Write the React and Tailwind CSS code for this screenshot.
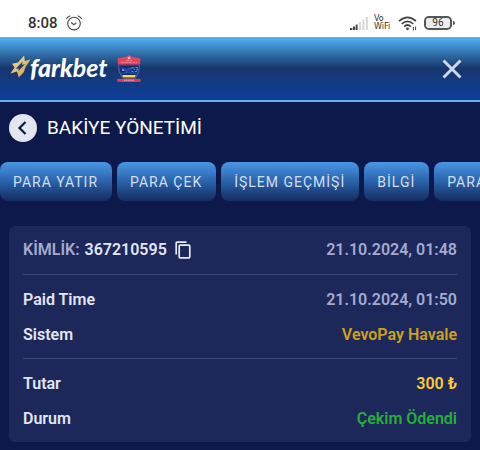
import React, { useState } from 'react'

const TABS = ['PARA YATIR', 'PARA ÇEK', 'İŞLEM GEÇMİŞİ', 'BİLGİ', 'PARA TRANSFERİ']

const SECTIONS = [
  [
    { label: 'Paid Time', value: '21.10.2024, 01:50', color: 'text-[#a4abce]' },
    { label: 'Sistem', value: 'VevoPay Havale', color: 'text-[#d0a01c]' },
  ],
  [
    { label: 'Tutar', value: '300 ₺', color: 'text-[#ffcb32]' },
    { label: 'Durum', value: 'Çekim Ödendi', color: 'text-[#27ae3c]' },
  ],
]

function AlarmIcon() {
  return (
    <svg className="w-4 h-4" viewBox="0 0 16 16" fill="none" stroke="#444" strokeWidth="1.1" strokeLinecap="round" strokeLinejoin="round">
      <circle cx="8" cy="8.6" r="6.3" />
      <path d="M5.4 7.8L8 9.7L10 8" />
      <path d="M0.7 3.6Q1.6 1.7 3.8 0.9M15.3 3.6Q14.4 1.7 12.2 0.9" />
    </svg>
  )
}

function SignalIcon() {
  return (
    <svg className="w-[18px] h-[13px]" viewBox="0 0 18 13">
      <path d="M0 11h2.4v2H0zM3 9.5h2.2V13H3zM5.8 7.500h1.8V13H5.800z" fill="#444" />
      <path d="M9 5h2v8H9zM12.3 2.500h2V13h-2zM15.8 0h2v13h-2z" fill="#d6d6d6" />
    </svg>
  )
}

function WifiIcon() {
  return (
    <svg className="w-5 h-[15px]" viewBox="0 0 20 15" fill="none" stroke="#444" strokeWidth="1.7">
      <path d="M1 5.2Q9.5 -2.6 18 5.2" />
      <path d="M3.7 8Q9.5 2.6 15.3 8" />
      <path d="M6.2 10.6Q9.5 7.4 12.8 10.6" />
      <circle cx="9.5" cy="12.8" r="1.4" fill="#444" stroke="none" />
      <path d="M15.4 14.5V11M17.6 10.5V14" strokeWidth="1" />
    </svg>
  )
}

function Battery({ level }) {
  return (
    <div className="flex items-center gap-px">
      <div className="w-7 h-[14px] rounded-[5px] border-2 border-[#555]">
        <div className="h-full rounded-sm bg-[#ececec] flex items-center justify-center text-[10px] leading-none tracking-wide text-[#333]">
          {level}
        </div>
      </div>
      <div className="w-0.5 h-1 rounded-r-sm bg-[#555]" />
    </div>
  )
}

function StarLogo() {
  return (
    <svg className="w-[22px] h-[23px]" viewBox="0 0 22 23">
      <defs>
        <linearGradient id="gold" x1="0" y1="0" x2="1" y2="1">
          <stop offset="0" stopColor="#f6e2ab" />
          <stop offset="0.5" stopColor="#e3bf70" />
          <stop offset="1" stopColor="#c1944a" />
        </linearGradient>
      </defs>
      <path
        fill="url(#gold)"
        fillRule="evenodd"
        d="M14.2 0.5L14.8 6L20.5 4.6L15.8 11.4L13.8 17.2L8.8 22.4L7 16.6L0.3 18.6L4.6 12.6L2 8.8L8 7.4ZM12.6 6.6L5.8 13.8L8.8 13.4L8.4 16L15.2 9L12 9.8Z"
      />
    </svg>
  )
}

function CrestBadge() {
  return (
    <svg className="w-[26px] h-7" viewBox="0 0 24 28">
      <path d="M1.6 9h20.8l-0.6 7.5L18.6 22.8H5.4L2.2 16.500z" fill="#172a78" stroke="#6f90cc" strokeWidth="0.7" />
      <path d="M0.5 3.500L9 1.8L12 0L15 1.8L23.500 3.500L23 9.500H1z" fill="#e8425c" />
      <path d="M1 9.500H23L22.8 10.600H1.2z" fill="#8f3558" />
      <path d="M10.8 1.8h2.400v2.400h-2.400z" fill="#f7c7cf" />
      <path d="M4 7.500h16M9 5.500h6" stroke="#f58a9a" strokeWidth="0.8" strokeDasharray="3 0.8" />
      <circle cx="6.5" cy="14.8" r="1.3" fill="#a9c8f2" />
      <path d="M3.500 12l6 2 2.500-1.500 2 1.500-2 2.500-3 0.500z" fill="#2450a4" />
      <path d="M13.500 13.500l3-1 1 2.500M18.500 12.500h1.800l-0.500 4h-2M14 16l2.500 0.8" stroke="#6a9ce0" strokeWidth="0.9" fill="none" />
      <path d="M4 18.200l6-0.500 9.500 0.500" stroke="#2a5cb0" fill="none" />
      <path d="M5.2 20h13.6l-0.900 2.300H6.1z" fill="#ece33a" />
      <path d="M0.3 24Q12 22.800 23.700 24V26.800Q12 27.400 0.3 26.800z" fill="#e53a5c" />
      <path d="M7 25.200h10" stroke="#ffb3c0" strokeWidth="1" strokeDasharray="1.5 0.6" />
    </svg>
  )
}

function StatusBar() {
  return (
    <div className="h-[37px] bg-white flex items-end justify-between pl-7 pr-[25px] pb-1.5 text-[#333]">
      <div className="flex items-center gap-2">
        <span className="text-[15px] leading-4 font-medium">8:08</span>
        <AlarmIcon />
      </div>
      <div className="flex items-center gap-1.5">
        <SignalIcon />
        <div className="w-[18px] flex flex-col font-['DejaVu_Sans',sans-serif] text-[8px] leading-2">
          <span>Vo</span>
          <span>WiFi</span>
        </div>
        <WifiIcon />
        <Battery level={96} />
      </div>
    </div>
  )
}

function Header() {
  return (
    <header className="h-[65px] flex items-center justify-between pl-2.5 pr-[18px] border-b-2 border-[#6fadf2] bg-linear-to-b from-[#55b5f8] via-[#17366c] to-[#0c3f9c]">
      <a href="#" aria-label="farkbet" className="flex items-center pb-1">
        <StarLogo />
        <span className="-ml-0.5 font-['Lato',sans-serif] text-[25px] leading-6 italic text-white">
          <span className="font-black">fark</span>
          <span className="font-bold">bet</span>
        </span>
        <span className="ml-2 pt-1"><CrestBadge /></span>
      </a>
      <button aria-label="Kapat">
        <svg className="w-5 h-5" viewBox="0 0 20 20" stroke="#cfdaee" strokeWidth="2.9">
          <path d="M1.500 1.500L18.500 18.500M18.500 1.500L1.500 18.500" />
        </svg>
      </button>
    </header>
  )
}

export default function App() {
  const [active, setActive] = useState('İŞLEM GEÇMİŞİ')

  return (
    <div className="min-h-screen overflow-hidden bg-[#0e194b] font-['Roboto',sans-serif]">
      <StatusBar />
      <Header />

      <main>
        {/* Title */}
        <div className="flex items-center gap-2.5 px-[9px] pt-3">
          <button aria-label="Geri" className="w-7 h-7 rounded-full bg-[#e4e6ef] flex items-center justify-center">
            <svg className="w-4 h-4" viewBox="0 0 16 16" fill="none" stroke="#0e194b" strokeWidth="2.2">
              <path d="M10.500 2L4.500 8L10.500 14" />
            </svg>
          </button>
          <h1 className="text-[19px] leading-7 text-white">BAKİYE YÖNETİMİ</h1>
        </div>

        {/* Tabs, the strip scrolls sideways */}
        <nav className="flex gap-[5px] pt-5 overflow-x-auto [scrollbar-width:none]">
          {TABS.map(tab => (
            <button
              key={tab}
              onClick={() => setActive(tab)}
              aria-pressed={active === tab}
              className="h-[39px] pl-[13px] pr-3.5 shrink-0 rounded-lg text-sm tracking-[1px] whitespace-nowrap text-[#d5deee] bg-linear-to-b from-[#4a97e6] via-[#2a63ab] to-[#142c5f]"
            >
              {tab}
            </button>
          ))}
        </nav>

        {/* Transaction card */}
        <section className="mx-[9px] mt-[25px] mb-2 px-3.5 rounded-md bg-[#1d285a] font-semibold text-[#e3e5f1]">
          <div className="h-12 flex items-center justify-between">
            <div className="flex items-center">
              <span className="text-[#a4abce]">KİMLİK:</span>
              <span className="ml-[5px]">367210595</span>
              <button aria-label="Kopyala" className="ml-2">
                <svg className="w-4 h-[18px]" viewBox="0 0 16 18" fill="none" stroke="#e8eaf4" strokeWidth="1.7">
                  <rect x="4.2" y="4.2" width="10.6" height="12.6" rx="1" />
                  <path d="M1.2 13.500V2Q1.2 1.2 2 1.2H11.500" />
                </svg>
              </button>
            </div>
            <time className="text-[#a4abce]">21.10.2024, 01:48</time>
          </div>
          {SECTIONS.map((rows, i) => (
            <dl key={i} className="border-t border-[#3a4677] pt-[7px] pb-1.5">
              {rows.map(row => (
                <div key={row.label} className="h-[35px] flex items-center justify-between">
                  <dt>{row.label}</dt>
                  <dd className={row.color}>{row.value}</dd>
                </div>
              ))}
            </dl>
          ))}
        </section>
      </main>
    </div>
  )
}
